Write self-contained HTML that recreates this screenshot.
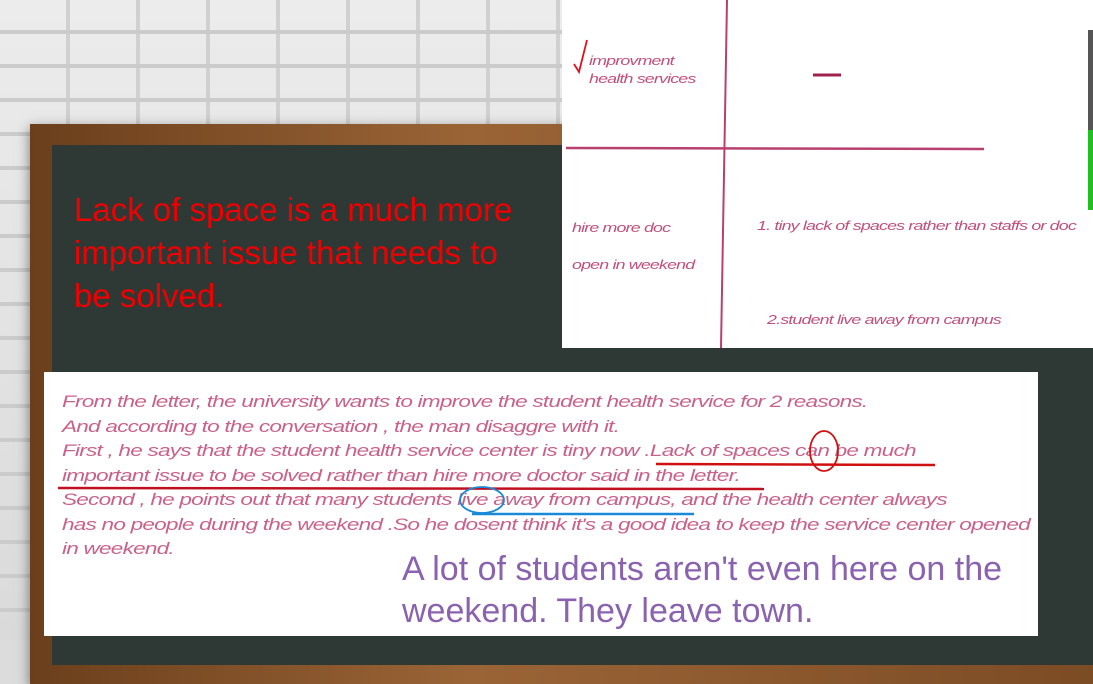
<!DOCTYPE html>
<html><head><meta charset="utf-8"><style>
*{margin:0;padding:0;box-sizing:border-box}
body{width:1093px;height:640px;overflow:hidden;position:relative;background:#dcdcdc;font-family:"Liberation Sans",sans-serif}
.wall{position:absolute;left:0;top:0;width:1093px;height:640px;
background:
repeating-linear-gradient(180deg,transparent 0 30px,#cbcbcb 30px 34px),
repeating-linear-gradient(90deg,transparent 0 66px,#d0d0d0 66px 70px),
linear-gradient(180deg,#ececec,#dadada);}
.frame{position:absolute;left:30px;top:124px;width:1100px;height:560px;background:linear-gradient(90deg,#6b3f1c,#9a6436 40%,#7a4a24);box-shadow:0 4px 12px rgba(0,0,0,.5)}
.board{position:absolute;left:52px;top:145px;width:1100px;height:520px;background:#2e3835}
.red{position:absolute;left:74px;top:188px;color:#f00000;font-size:33px;line-height:43px;white-space:nowrap}
.tp{position:absolute;left:562px;top:0;width:531px;height:348px;background:#fff}
.hw{font-family:"Liberation Sans",sans-serif;font-style:italic;color:#c0507c;position:absolute;white-space:nowrap;letter-spacing:-.6px;transform:scaleX(1.37);transform-origin:left top}
.strip{position:absolute;left:1088px;top:30px;width:5px;height:180px;background:#555}
.bp{position:absolute;left:44px;top:372px;width:994px;height:264px;background:#fff;overflow:hidden}
.pur{position:absolute;left:402px;top:548px;color:#8a62b0;font-size:34px;line-height:42px;white-space:nowrap}
</style></head><body>
<div class="wall"></div>
<div class="frame"></div>
<div class="board"></div>
<div class="red">Lack of space is a much more<br>important issue that needs to<br>be solved.</div>
<div class="tp">
<svg width="531" height="348" style="position:absolute;left:0;top:0">
<line x1="165" y1="0" x2="159" y2="348" stroke="#b8406e" stroke-width="2"/>
<line x1="4" y1="148" x2="422" y2="149" stroke="#b8406e" stroke-width="2.5"/>
<line x1="251" y1="75" x2="279" y2="75" stroke="#a0204e" stroke-width="3"/>
<path d="M12 64 L17 72 L25 40" stroke="#e01020" stroke-width="1.8" fill="none"/>
</svg>
<div class="hw" style="left:27px;top:52px;font-size:13px;line-height:18px">improvment<br>health services</div>
<div class="hw" style="left:10px;top:220px;font-size:13px">hire more doc</div>
<div class="hw" style="left:10px;top:257px;font-size:13px">open in weekend</div>
<div class="hw" style="left:195px;top:218px;font-size:13px">1. tiny lack of spaces rather than staffs or doc</div>
<div class="hw" style="left:205px;top:312px;font-size:13px">2.student live away from campus</div>
</div>
<div class="strip"><div style="position:absolute;top:100px;width:5px;height:80px;background:#20c020"></div></div>
<div class="bp">
<div class="hw" style="left:18px;top:18px;font-size:17px;line-height:24.5px;color:#c9628a;transform:scaleX(1.33)">From the letter, the university wants to improve the student health service for 2 reasons.<br>And according to the conversation , the man disaggre with it.<br>First , he says that the student health service center is tiny now .Lack of spaces can be much<br>important issue to be solved rather than hire more doctor said in the letter.<br>Second , he points out that many students live away from campus, and the health center always<br>has no people during the weekend .So he dosent think it's a good idea to keep the service center opened<br>in weekend.</div>
<svg width="994" height="264" style="position:absolute;left:0;top:0">
<line x1="612" y1="92" x2="891" y2="93" stroke="#d01010" stroke-width="2.5"/>
<line x1="14" y1="116" x2="720" y2="117" stroke="#c01020" stroke-width="2.5"/>
<ellipse cx="780" cy="79" rx="14" ry="20" stroke="#d01010" stroke-width="1.8" fill="none"/>
<ellipse cx="438" cy="128" rx="22" ry="13" stroke="#1a8ad8" stroke-width="1.8" fill="none"/>
<line x1="428" y1="142" x2="650" y2="142" stroke="#1a8ad8" stroke-width="2.5"/>
</svg>
</div>
<div class="pur">A lot of students aren't even here on the<br>weekend. They leave town.</div>
</body></html>
